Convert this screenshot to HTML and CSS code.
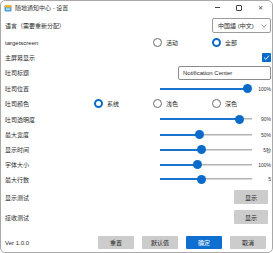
FILE: index.html
```html
<!DOCTYPE html>
<html>

<head>
    <title>随地通知中心 - 设置</title>
    <meta charset="utf-8">
    <link rel="stylesheet" href="styles.css">
</head>

<body>
    <div class="window">
        <div class="titlebar">
            <svg class="app-icon" width="8" height="8" viewBox="0 0 8 8">
                <rect x="0.5" y="1" width="7" height="6.5" rx="1" fill="#4aa3df"/>
                <rect x="0.5" y="1" width="7" height="2.5" rx="1" fill="#f2b632"/>
                <rect x="2" y="4.5" width="4" height="1.2" fill="#dff0fb"/>
            </svg>
            <span class="title">随地通知中心 - 设置</span>
            <div class="caption">
                <span class="cap-min"></span>
                <span class="cap-max"></span>
                <span class="cap-close">✕</span>
            </div>
        </div>

        <div class="settings">
            <div class="row">
                <span class="label">语言（需要重新分配）</span>
                <div class="select">中国語 (中文)
                    <svg width="6" height="4" viewBox="0 0 6 4"><path d="M0.5 0.8 L3 3.2 L5.5 0.8" fill="none" stroke="#555" stroke-width="0.7"/></svg>
                </div>
            </div>
            <div class="row">
                <span class="label">targetscreen</span>
                <div class="radios">
                    <label class="radio col-2"><i></i>活动</label>
                    <label class="radio checked"><i></i>全部</label>
                </div>
            </div>
            <div class="row">
                <span class="label">主屏幕显示</span>
                <span class="checkbox">
                    <svg width="7" height="7" viewBox="0 0 7 7"><path d="M1 3.6 L2.9 5.4 L6 1.6" fill="none" stroke="#fff" stroke-width="0.9"/></svg>
                </span>
            </div>
            <div class="row">
                <span class="label">吐司标题</span>
                <div class="textbox">Notification Center</div>
            </div>
            <div class="row">
                <span class="label">吐司位置</span>
                <div class="slider-field">
                    <div class="slider" style="--v: 1"><span class="thumb"></span></div>
                    <span class="value">100%</span>
                </div>
            </div>
            <div class="row">
                <span class="label">吐司颜色</span>
                <div class="radios">
                    <label class="radio checked"><i></i>系统</label>
                    <label class="radio"><i></i>浅色</label>
                    <label class="radio"><i></i>深色</label>
                </div>
            </div>
            <div class="row">
                <span class="label">吐司透明度</span>
                <div class="slider-field">
                    <div class="slider" style="--v: 0.9"><span class="thumb"></span></div>
                    <span class="value">90%</span>
                </div>
            </div>
            <div class="row">
                <span class="label">最大宽度</span>
                <div class="slider-field">
                    <div class="slider" style="--v: 0.425"><span class="thumb"></span></div>
                    <span class="value">50%</span>
                </div>
            </div>
            <div class="row">
                <span class="label">显示时间</span>
                <div class="slider-field">
                    <div class="slider" style="--v: 0.44"><span class="thumb"></span></div>
                    <span class="value">5秒</span>
                </div>
            </div>
            <div class="row">
                <span class="label">字体大小</span>
                <div class="slider-field">
                    <div class="slider" style="--v: 0.4"><span class="thumb"></span></div>
                    <span class="value">100%</span>
                </div>
            </div>
            <div class="row">
                <span class="label">最大行数</span>
                <div class="slider-field">
                    <div class="slider" style="--v: 0.45"><span class="thumb"></span></div>
                    <span class="value">5</span>
                </div>
            </div>
            <div class="row">
                <span class="label">显示测试</span>
                <button class="btn test">显示</button>
            </div>
            <div class="row">
                <span class="label">接收测试</span>
                <button class="btn test">显示</button>
            </div>
        </div>

        <div class="footer">
            <span class="version">Ver 1.0.0</span>
            <div class="actions">
                <button class="btn">重置</button>
                <button class="btn">默认值</button>
                <button class="btn primary">确定</button>
                <button class="btn">取消</button>
            </div>
        </div>
    </div>
</body>

</html>
```

FILE: styles.css
```css
body {
    margin: 0;
    overflow: hidden;
    background: #fff;
}

.window {
    width: 273px;
    height: 253px;
    box-sizing: border-box;
    border: 1px solid #a9a9a9;
    border-radius: 5px;
    background: #fff;
    display: flex;
    flex-direction: column;
    font-family: "Liberation Sans", "Noto Sans CJK SC", sans-serif;
    font-size: 6px;
    color: #2a2a2a;
    overflow: hidden;
}

.titlebar {
    height: 13px;
    display: flex;
    align-items: center;
    padding-left: 3px;
    flex-shrink: 0;
}

.titlebar .app-icon {
    margin-right: 3px;
}

.titlebar .title {
    color: #333;
}

.caption {
    margin-left: auto;
    display: flex;
    height: 100%;
}

.caption span {
    width: 21px;
    display: flex;
    align-items: center;
    justify-content: center;
    color: #444;
}

.caption .cap-min::before {
    content: "";
    width: 5px;
    height: 1px;
    background: #444;
}

.caption .cap-max::before {
    content: "";
    width: 4px;
    height: 4px;
    border: 1px solid #444;
    border-radius: 1px;
}

.caption .cap-close {
    font-size: 6px;
    width: 23px;
}

.settings {
    margin-top: 3px;
    padding: 0 4px;
    display: grid;
    grid-template-rows: 17px 17px 13px 17px 15px 15px 16px 15px 15px 15px 14px 22px 18px;
}

.row {
    display: grid;
    grid-template-columns: 89px 1fr;
    align-items: center;
}

.row > :last-child {
    justify-self: end;
}

.select {
    width: 59px;
    height: 15px;
    box-sizing: border-box;
    border: 1px solid #9b9b9b;
    border-radius: 2px;
    display: flex;
    align-items: center;
    justify-content: space-between;
    padding: 0 3px 0 5px;
}

.radios {
    display: grid;
    grid-template-columns: repeat(3, 59px);
    justify-self: start !important;
}

.radios .col-2 {
    grid-column-start: 2;
}

.radio {
    display: flex;
    align-items: center;
    gap: 4px;
}

.radio i {
    width: 9px;
    height: 9px;
    box-sizing: border-box;
    border: 1px solid #6b6b6b;
    border-radius: 50%;
    background: #fff;
}

.radio.checked i {
    border: 2.6px solid #0b6bcb;
}

.checkbox {
    width: 9px;
    height: 9px;
    background: #0b6bcb;
    border-radius: 1px;
    display: flex;
    align-items: center;
    justify-content: center;
}

.textbox {
    width: 93px;
    height: 14px;
    box-sizing: border-box;
    border: 1px solid #8c8c8c;
    border-radius: 2px;
    display: flex;
    align-items: center;
    padding-left: 4px;
}

.slider-field {
    display: flex;
    align-items: center;
}

.slider {
    position: relative;
    width: 92px;
    height: 9px;
    background: linear-gradient(#b3b3b3, #b3b3b3) no-repeat center / 100% 1.5px;
}

.slider::before {
    content: "";
    position: absolute;
    left: 0;
    top: 3.5px;
    height: 2px;
    width: calc(var(--v) * 83px + 4.5px);
    background: #1a73cf;
}

.slider .thumb {
    position: absolute;
    top: 0;
    left: calc(var(--v) * 83px);
    width: 9px;
    height: 9px;
    border-radius: 50%;
    background: #0b6bcb;
}

.value {
    width: 19px;
    text-align: right;
    font-size: 5px;
    color: #333;
}

.btn {
    font-family: inherit;
    font-size: 6px;
    color: #222;
    border: none;
    border-radius: 1px;
    background: #cccccc;
    padding: 0;
    height: 13px;
    width: 36px;
}

.btn.test {
    width: 34px;
    height: 14px;
    margin-right: 3px;
}

.btn.primary {
    background: #0f6fd0;
    color: #fff;
}

.footer {
    margin-top: auto;
    display: flex;
    align-items: center;
    padding: 0 6px 3px 4px;
}

.actions {
    margin-left: auto;
    display: flex;
    gap: 8px;
}
```
